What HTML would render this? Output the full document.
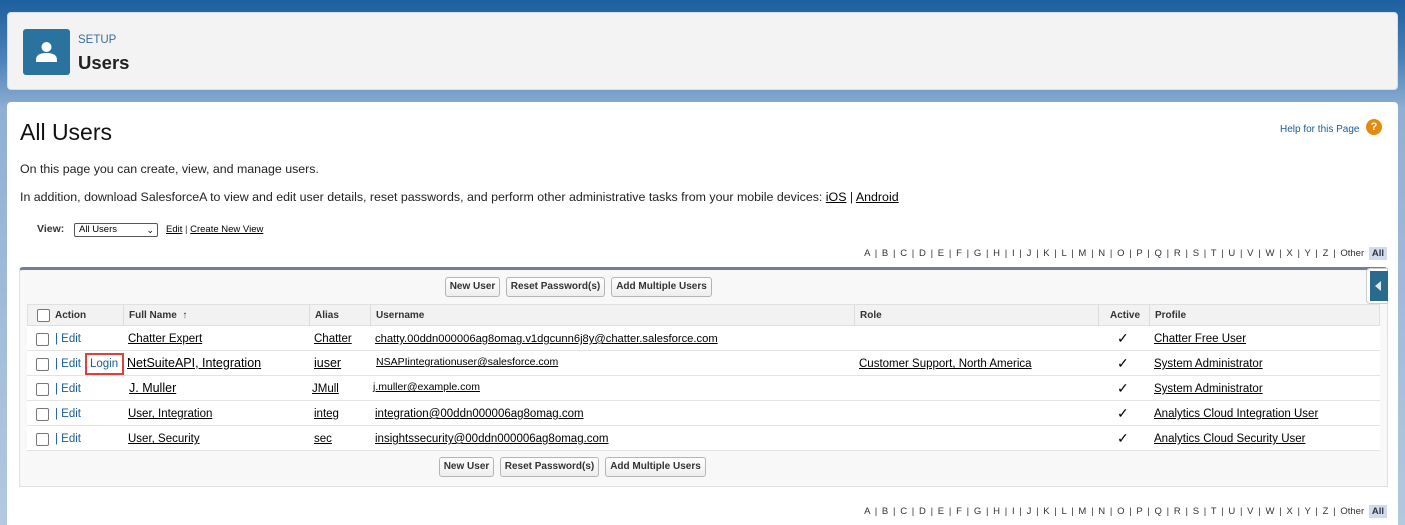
<!DOCTYPE html>
<html><head><style>
*{margin:0;padding:0;box-sizing:border-box}
html{overflow:hidden;height:525px}
body{width:1405px;height:525px;overflow:hidden;font-family:"Liberation Sans",Arial,sans-serif;background:linear-gradient(#1d5f9f 0,#4c82b8 60px,#8fb0d3 110px,#b4c8e0 525px);position:relative}
.a{position:absolute;white-space:nowrap}
.u{text-decoration:underline;color:#000}
.card{position:absolute;left:7px;top:12px;width:1391px;height:78px;background:#f3f3f3;border-radius:4px;border:1px solid #d8dde6}
.main{position:absolute;left:7px;top:102px;width:1391px;height:423px;background:#fff;border-radius:4px 4px 0 0}
.btn{position:absolute;height:20px;border:1px solid #b5b5b5;border-radius:3px;background:linear-gradient(#fff,#eee);font-size:10px;font-weight:bold;color:#333;line-height:18px;text-align:center}
.cb{position:absolute;width:13px;height:13px;border:1px solid #777;border-radius:2px;background:#fff}
.row{position:absolute;left:27px;width:1353px;height:25px;border-bottom:1px solid #e3e3e3;background:#fff;font-size:11.5px}
.row .a{top:7px}
.ed{color:#1a5b9a}
.chk{font-size:14px;top:4px!important}
.alpha{font-size:9.5px;color:#333;word-spacing:2.1px}
</style></head><body>
<div class="card">
 <div class="a" style="left:15px;top:16px;width:47px;height:46px;background:#2a739e;border-radius:3px">
  <svg width="47" height="46" viewBox="0 0 47 46"><circle cx="23.5" cy="18" r="5" fill="#fff"/><path d="M13 31c0-5 4-7 10.5-7S34 26 34 31v2H13z" fill="#fff"/></svg>
 </div>
 <div class="a" style="left:70px;top:21px;font-size:11.5px;color:#3a6ea5">SETUP</div>
 <div class="a" style="left:70px;top:39px;font-size:18.5px;font-weight:bold;color:#222">Users</div>
</div>
<div class="main"></div>
<div class="a" style="left:20px;top:119px;font-size:23px;color:#111">All Users</div>
<div class="a" style="left:1280px;top:124px;font-size:10px;color:#1a5b9a">Help for this Page</div>
<div class="a" style="left:1366px;top:119px;width:16px;height:16px;border-radius:50%;background:#e58a0f;color:#fff;font-size:11px;font-weight:bold;text-align:center;line-height:16px">?</div>
<div class="a" style="left:20px;top:162px;font-size:12.4px;color:#222">On this page you can create, view, and manage users.</div>
<div class="a" style="left:20px;top:190px;font-size:12.4px;color:#222">In addition, download SalesforceA to view and edit user details, reset passwords, and perform other administrative tasks from your mobile devices: <span class="u">iOS</span> | <span class="u">Android</span></div>
<div class="a" style="left:37px;top:223px;font-size:10.5px;font-weight:bold;color:#333">View:</div>
<div class="a" style="left:74px;top:223px;width:84px;height:14px;border:1px solid #555;border-radius:2px;font-size:9.5px;padding-left:4px;line-height:12px">All Users<span style="position:absolute;right:3px;top:0;font-size:9px">&#8964;</span></div>
<div class="a" style="left:166px;top:224px;font-size:9.5px;color:#333"><span class="u">Edit</span> | <span class="u">Create New View</span></div>
<div class="a alpha" style="right:18px;top:248px">A | B | C | D | E | F | G | H | I | J | K | L | M | N | O | P | Q | R | S | T | U | V | W | X | Y | Z | Other <b style="background:#cfdcef;padding:1px 3px">All</b></div>
<div class="a" style="left:19px;top:267px;width:1369px;height:220px;background:#f8f8f8;border-top:3px solid #747e96;border-radius:4px 4px 0 0;border-left:1px solid #e0e0e0;border-right:1px solid #e0e0e0;border-bottom:1px solid #e0e0e0"></div>
<div class="a" style="left:1366px;top:268px;width:22px;height:36px;background:#fff;border-radius:4px 0 0 4px;border:1px solid #ccc"><div style="position:absolute;left:3px;top:2px;width:18px;height:30px;background:#286b8c"><div style="position:absolute;left:5px;top:10px;border-right:6px solid #e0e8f0;border-top:5px solid transparent;border-bottom:5px solid transparent"></div></div></div>
<div class="btn" style="left:445px;top:277px;width:55px">New User</div>
<div class="btn" style="left:506px;top:277px;width:99px">Reset Password(s)</div>
<div class="btn" style="left:611px;top:277px;width:101px">Add Multiple Users</div>
<div class="a" style="left:27px;top:304px;width:1353px;height:22px;background:#f2f2f2;border:1px solid #e0e0e0;font-size:10px;font-weight:bold;color:#333">
 <div class="cb" style="left:9px;top:4px"></div>
 <div class="a" style="left:27px;top:5px">Action</div>
 <div class="a" style="left:95px;top:0;height:21px;border-left:1px solid #ddd"></div>
 <div class="a" style="left:101px;top:5px">Full Name &nbsp;&#8593;</div>
 <div class="a" style="left:281px;top:0;height:21px;border-left:1px solid #ddd"></div>
 <div class="a" style="left:287px;top:5px">Alias</div>
 <div class="a" style="left:342px;top:0;height:21px;border-left:1px solid #ddd"></div>
 <div class="a" style="left:348px;top:5px">Username</div>
 <div class="a" style="left:826px;top:0;height:21px;border-left:1px solid #ddd"></div>
 <div class="a" style="left:832px;top:5px">Role</div>
 <div class="a" style="left:1070px;top:0;height:21px;border-left:1px solid #ddd"></div>
 <div class="a" style="left:1082px;top:5px">Active</div>
 <div class="a" style="left:1121px;top:0;height:21px;border-left:1px solid #ddd"></div>
 <div class="a" style="left:1127px;top:5px">Profile</div>
</div>
<div class="row" style="top:326px"><div class="cb" style="left:9px;top:7px"></div><div class="a ed" style="left:28px">| Edit</div><div class="a u" style="left:101px">Chatter Expert</div><div class="a u" style="left:287px">Chatter</div><div class="a u" style="left:348px;font-size:11.2px">chatty.00ddn000006ag8omag.v1dgcunn6j8y@chatter.salesforce.com</div><div class="a chk" style="left:1090px">&#10003;</div><div class="a u" style="left:1127px">Chatter Free User</div></div>
<div class="row" style="top:351px"><div class="cb" style="left:9px;top:7px"></div><div class="a ed" style="left:28px">| Edit</div><div class="a" style="left:58px;top:2px!important;width:39px;height:22px;border:2px solid #e0403a"></div><div class="a ed" style="left:63px">Login</div><div class="a u" style="left:100px;top:5px;font-size:12.5px">NetSuiteAPI, Integration</div><div class="a u" style="left:287px;font-size:12.5px;top:5px">iuser</div><div class="a u" style="left:349px;top:5px;font-size:10.5px">NSAPIintegrationuser@salesforce.com</div><div class="a u" style="left:832px">Customer Support, North America</div><div class="a chk" style="left:1090px">&#10003;</div><div class="a u" style="left:1127px">System Administrator</div></div>
<div class="row" style="top:376px"><div class="cb" style="left:9px;top:7px"></div><div class="a ed" style="left:28px">| Edit</div><div class="a u" style="left:102px;top:5px;font-size:12.5px">J. Muller</div><div class="a u" style="left:285px">JMull</div><div class="a u" style="left:346px;font-size:10.5px;top:5px">j.muller@example.com</div><div class="a chk" style="left:1090px">&#10003;</div><div class="a u" style="left:1127px">System Administrator</div></div>
<div class="row" style="top:401px"><div class="cb" style="left:9px;top:7px"></div><div class="a ed" style="left:28px">| Edit</div><div class="a u" style="left:101px">User, Integration</div><div class="a u" style="left:287px">integ</div><div class="a u" style="left:348px">integration@00ddn000006ag8omag.com</div><div class="a chk" style="left:1090px">&#10003;</div><div class="a u" style="left:1127px">Analytics Cloud Integration User</div></div>
<div class="row" style="top:426px"><div class="cb" style="left:9px;top:7px"></div><div class="a ed" style="left:28px">| Edit</div><div class="a u" style="left:101px">User, Security</div><div class="a u" style="left:287px">sec</div><div class="a u" style="left:348px">insightssecurity@00ddn000006ag8omag.com</div><div class="a chk" style="left:1090px">&#10003;</div><div class="a u" style="left:1127px">Analytics Cloud Security User</div></div>
<div class="btn" style="left:439px;top:457px;width:55px">New User</div>
<div class="btn" style="left:500px;top:457px;width:99px">Reset Password(s)</div>
<div class="btn" style="left:605px;top:457px;width:101px">Add Multiple Users</div>
<div class="a alpha" style="right:18px;top:506px">A | B | C | D | E | F | G | H | I | J | K | L | M | N | O | P | Q | R | S | T | U | V | W | X | Y | Z | Other <b style="background:#cfdcef;padding:1px 3px">All</b></div>
</body></html>
